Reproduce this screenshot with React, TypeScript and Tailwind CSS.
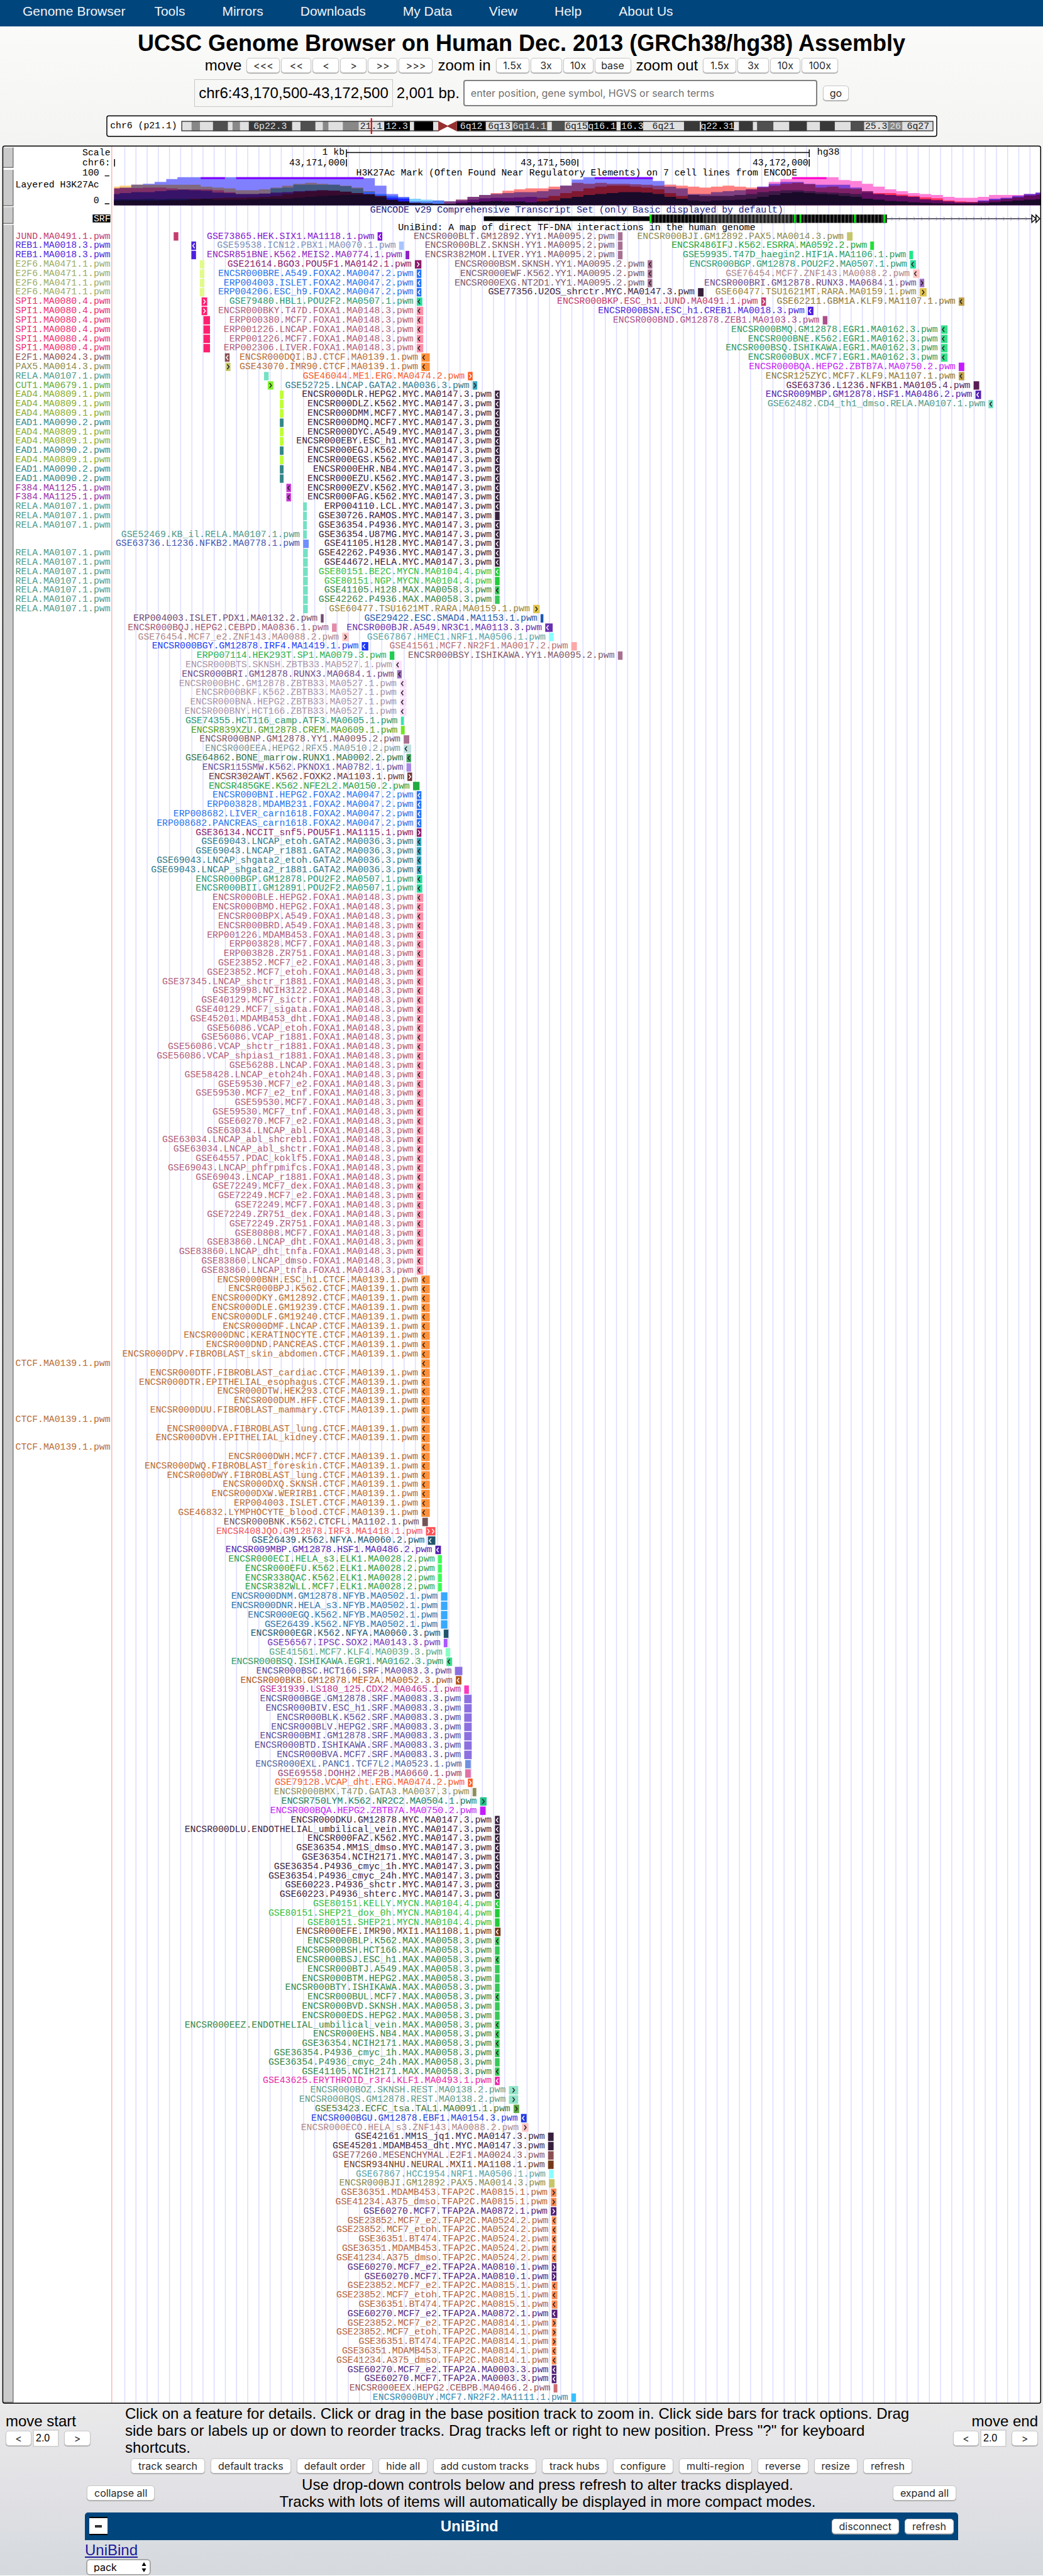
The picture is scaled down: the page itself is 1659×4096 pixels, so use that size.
import React from "react";

/* ---------- transcription factor colours: [label, box] ---------- */
const PALETTE: Record<string, [string, string]> = {
  JUND: ["#c43c6c", "#c43c6e"],
  REB1: ["#4d28dc", "#4d1ee0"],
  CREB1: ["#4d28dc", "#4d1ee0"],
  E2F6: ["#9aac62", "#e1fb8b"],
  SPI1: ["#f22a6c", "#ff1f70"],
  E2F1: ["#8a5257", "#8a4f52"],
  PAX5: ["#8b8b50", "#c6c66a"],
  RELA: ["#4f9a88", "#74e0c4"],
  CUT1: ["#62ac35", "#80f030"],
  EAD4: ["#85ad2c", "#bfff38"],
  EAD1: ["#348a88", "#358787"],
  F384: ["#9a2fa8", "#cc38d8"],
  SIX1: ["#8418d0", "#8010d8"],
  PBX1: ["#7d90b8", "#a9c4ff"],
  MEIS2: ["#8c28b8", "#8d20c4"],
  POU5F1: ["#8a1c6a", "#8a1a6c"],
  FOXA2: ["#2874ec", "#2070ff"],
  POU2F2: ["#2a9a74", "#28dfa0"],
  FOXA1: ["#b0607a", "#ff8fa8"],
  CTCF: ["#b96c34", "#ff9038"],
  CTCFL: ["#765458", "#745458"],
  ERG: ["#fa5a28", "#ff5a20"],
  GATA2: ["#2f7a8a", "#38a8c0"],
  GATA3: ["#8f8f58", "#8f8f58"],
  MYC: ["#3c2440", "#38203c"],
  MYCN: ["#34c040", "#20cc38"],
  MAX: ["#358848", "#38c858"],
  YY1: ["#805868", "#a87090"],
  ZEB1: ["#aa5088", "#aa5088"],
  ESRRA: ["#22a638", "#20e038"],
  HIF1A: ["#289c64", "#20e888"],
  ZNF143: ["#b08888", "#ffc4c4"],
  RUNX3: ["#704c88", "#a070c0"],
  RARA: ["#9a8438", "#e0c450"],
  KLF9: ["#8c7838", "#c0a048"],
  EGR1: ["#309a60", "#38e08c"],
  ZBTB7A: ["#c424f4", "#c41cff"],
  NFKB1: ["#5a1f56", "#581c54"],
  NFKB2: ["#4458b0", "#7090ff"],
  HSF1: ["#5424ac", "#5420b0"],
  PDX1: ["#704c70", "#704c70"],
  SMAD4: ["#1c58a8", "#1c58b0"],
  CEBPD: ["#a45870", "#e48ca8"],
  CEBPB: ["#9c5458", "#cc7074"],
  NR3C1: ["#6834ac", "#6830b0"],
  NRF1: ["#58a4a4", "#88ffff"],
  IRF4: ["#1c3cf4", "#1c38ff"],
  NR2F1: ["#b87070", "#ffa8a8"],
  SP1: ["#28b050", "#20cc54"],
  ZBTB33: ["#a894a8", "#fce0fc"],
  ATF3: ["#289870", "#38e4ac"],
  CREM: ["#509c20", "#70e818"],
  RFX5: ["#809898", "#c0e0e0"],
  RUNX1: ["#347448", "#48a868"],
  PKNOX1: ["#685098", "#a888e4"],
  FOXK2: ["#703838", "#703434"],
  NFE2L2: ["#28a040", "#20ac40"],
  IRF3: ["#f45458", "#ff5054"],
  NFYA: ["#245870", "#20546c"],
  NFYB: ["#2c74a8", "#38a8ff"],
  ELK1: ["#30a040", "#38ff50"],
  SOX2: ["#7838b8", "#a858ff"],
  KLF4: ["#58a880", "#88ffc4"],
  SRF: ["#5c4c98", "#8c70e0"],
  MEF2A: ["#b05820", "#b0581c"],
  MEF2B: ["#a04c74", "#e070a8"],
  CDX2: ["#c0308c", "#ff38c0"],
  TCF7L2: ["#5068a0", "#7090e0"],
  NR2C2: ["#208060", "#20c48c"],
  MXI1: ["#743c20", "#743818"],
  KLF1: ["#e828a8", "#ec20a8"],
  REST: ["#609c88", "#90e4c8"],
  TAL1: ["#487830", "#60a844"],
  EBF1: ["#2440dc", "#2038e0"],
  TFAP2C: ["#b46440", "#ff8c54"],
  TFAP2A: ["#54287c", "#542078"],
  NR2F2: ["#388cac", "#38c0ff"],
};

const WHITE_STRAND = new Set(
  "SIX1 CREB1 REB1 POU5F1 FOXA2 SPI1 E2F1 ERG MYC MYCN JUND HSF1 NR3C1 IRF4 FOXK2 IRF3 NFYA MEF2A MXI1 KLF1 EBF1 TFAP2A".split(" "),
);

/* [first row, x, width, strand, motif, sample names on consecutive rows];
   the name "-" puts a clipped label into the left gutter */
type Group = [number, number, number, string, string, string];

const GROUPS: Group[] = [
  [0, 373, 10, "", "JUND.MA0491.1", "-"],
  [1, 411, 10, "<", "REB1.MA0018.3", "-"],
  [2, 411, 10, "", "REB1.MA0018.3", "-"],
  [3, 429, 10, "", "E2F6.MA0471.1", "- - - -"],
  [7, 433, 12, ">", "SPI1.MA0080.4", "- -"],
  [9, 437, 14, "", "SPI1.MA0080.4", "- - - -"],
  [13, 483, 10, "<", "E2F1.MA0024.3", "-"],
  [14, 485, 10, ">", "PAX5.MA0014.3", "-"],
  [15, 567, 10, "", "RELA.MA0107.1", "-"],
  [16, 575, 12, ">", "CUT1.MA0679.1", "-"],
  [17, 601, 8, "", "EAD4.MA0809.1", "- - -"],
  [20, 601, 8, "", "EAD1.MA0090.2", "-"],
  [21, 601, 8, "", "EAD4.MA0809.1", "- -"],
  [23, 601, 8, "", "EAD1.MA0090.2", "-"],
  [24, 601, 8, "", "EAD4.MA0809.1", "-"],
  [25, 601, 8, "", "EAD1.MA0090.2", "- -"],
  [27, 615, 10, "<", "F384.MA1125.1", "- -"],
  [29, 651, 8, "", "RELA.MA0107.1", "- - - GSE52469.KB_il"],
  [33, 651, 12, "", "NFKB2.MA0778.1", "GSE63736.L1236"],
  [34, 651, 10, "", "RELA.MA0107.1", "- - - - - - -"],

  [0, 811, 10, "<", "SIX1.MA1118.1", "GSE73865.HEK"],
  [1, 857, 10, "", "PBX1.MA0070.1", "GSE59538.ICN12"],
  [2, 871, 8, "", "MEIS2.MA0774.1", "ENCSR851BNE.K562"],
  [3, 891, 14, ">", "POU5F1.MA0142.1", "GSE21614.BGO3"],
  [4, 895, 10, "<", "FOXA2.MA0047.2", "ENCSR000BRE.A549 ERP004003.ISLET ERP004206.ESC_h9"],
  [7, 895, 12, "<", "POU2F2.MA0507.1", "GSE79480.HBL1"],
  [8, 895, 14, "<", "FOXA1.MA0148.3", "ENCSR000BKY.T47D ERP000380.MCF7 ERP001226.LNCAP ERP001226.MCF7 ERP002306.LIVER"],
  [13, 905, 18, "<", "CTCF.MA0139.1", "ENCSR000DQI.BJ GSE43070.IMR90"],
  [15, 1005, 10, ">", "ERG.MA0474.2", "GSE46044.ME1"],
  [16, 1015, 10, ">", "GATA2.MA0036.3", "GSE52725.LNCAP"],
  [17, 1063, 10, "<", "MYC.MA0147.3", "ENCSR000DLR.HEPG2 ENCSR000DLZ.K562 ENCSR000DMM.MCF7 ENCSR000DMQ.MCF7 ENCSR000DYC.A549 ENCSR000EBY.ESC_h1 ENCSR000EGJ.K562 ENCSR000EGS.K562 ENCSR000EHR.NB4 ENCSR000EZU.K562 ENCSR000EZV.K562 ENCSR000FAG.K562 ERP004110.LCL"],
  [30, 1063, 10, "", "MYC.MA0147.3", "GSE30726.RAMOS"],
  [31, 1063, 10, "<", "MYC.MA0147.3", "GSE36354.P4936 GSE36354.U87MG GSE41105.H128 GSE42262.P4936 GSE44672.HELA"],
  [36, 1063, 10, "<", "MYCN.MA0104.4", "GSE80151.BE2C"],
  [37, 1063, 10, "", "MYCN.MA0104.4", "GSE80151.NGP"],
  [38, 1063, 10, "<", "MAX.MA0058.3", "GSE41105.H128"],
  [39, 1063, 10, "", "MAX.MA0058.3", "GSE42262.P4936"],
  [40, 1145, 14, ">", "RARA.MA0159.1", "GSE60477.TSU1621MT"],

  [0, 1327, 10, "", "YY1.MA0095.2", "ENCSR000BLT.GM12892 ENCSR000BLZ.SKNSH ENCSR382MOM.LIVER"],
  [3, 1391, 10, "<", "YY1.MA0095.2", "ENCSR000BSM.SKNSH ENCSR000EWF.K562 ENCSR000EXG.NT2D1"],
  [6, 1499, 12, "", "MYC.MA0147.3", "GSE77356.U2OS_shrctr"],
  [7, 1635, 10, ">", "JUND.MA0491.1", "ENCSR000BKP.ESC_h1"],
  [8, 1735, 12, "<", "CREB1.MA0018.3", "ENCSR000BSN.ESC_h1"],
  [9, 1767, 10, "", "ZEB1.MA0103.3", "ENCSR000BND.GM12878"],

  [0, 1819, 12, "", "PAX5.MA0014.3", "ENCSR000BJI.GM12892"],
  [1, 1869, 8, "", "ESRRA.MA0592.2", "ENCSR486IFJ.K562"],
  [2, 1953, 8, "", "HIF1A.MA1106.1", "GSE59935.T47D_haegin2"],
  [3, 1955, 12, "<", "POU2F2.MA0507.1", "ENCSR000BGP.GM12878"],
  [4, 1961, 14, "<", "ZNF143.MA0088.2", "GSE76454.MCF7"],
  [5, 1975, 10, ">", "RUNX3.MA0684.1", "ENCSR000BRI.GM12878"],
  [6, 1975, 15, ">", "RARA.MA0159.1", "GSE60477.TSU1621MT"],
  [7, 2059, 12, "<", "KLF9.MA1107.1", "GSE62211.GBM1A"],
  [10, 2021, 14, "<", "EGR1.MA0162.3", "ENCSR000BMQ.GM12878 ENCSR000BNE.K562 ENCSR000BSQ.ISHIKAWA ENCSR000BUX.MCF7"],
  [14, 2059, 12, "", "ZBTB7A.MA0750.2", "ENCSR000BQA.HEPG2"],
  [15, 2059, 12, "<", "KLF9.MA1107.1", "ENCSR125ZYC.MCF7"],
  [16, 2091, 12, "", "NFKB1.MA0105.4", "GSE63736.L1236"],
  [17, 2095, 12, "<", "HSF1.MA0486.2", "ENCSR009MBP.GM12878"],
  [18, 2123, 10, "<", "RELA.MA0107.1", "GSE62482.CD4_th1_dmso"],

  [41, 689, 6, "", "PDX1.MA0132.2", "ERP004003.ISLET"],
  [41, 1161, 6, "", "SMAD4.MA1153.1", "GSE29422.ESC"],
  [42, 713, 10, "", "CEBPD.MA0836.1", "ENCSR000BQJ.HEPG2"],
  [42, 1171, 16, "<", "NR3C1.MA0113.3", "ENCSR000BJR.A549"],
  [43, 735, 14, ">", "ZNF143.MA0088.2", "GSE76454.MCF7_e2"],
  [43, 1179, 10, "", "NRF1.MA0506.1", "GSE67867.HMEC1"],
  [44, 777, 14, "<", "IRF4.MA1419.1", "ENCSR000BGY.GM12878"],
  [44, 1227, 12, "", "NR2F1.MA0017.2", "GSE41561.MCF7"],
  [45, 837, 10, "", "SP1.MA0079.3", "ERP007114.HEK293T"],
  [45, 1327, 10, "", "YY1.MA0095.2", "ENCSR000BSY.ISHIKAWA"],
  [46, 849, 14, "<", "ZBTB33.MA0527.1", "ENCSR000BTS.SKNSH"],
  [47, 853, 10, "<", "RUNX3.MA0684.1", "ENCSR000BRI.GM12878"],
  [48, 859, 14, "<", "ZBTB33.MA0527.1", "ENCSR000BHC.GM12878 ENCSR000BKF.K562 ENCSR000BNA.HEPG2 ENCSR000BNY.HCT166"],
  [52, 861, 6, "", "ATF3.MA0605.1", "GSE74355.HCT116_camp"],
  [53, 861, 8, "", "CREM.MA0609.1", "ENCSR839XZU.GM12878"],
  [54, 867, 12, "", "YY1.MA0095.2", "ENCSR000BNP.GM12878"],
  [55, 867, 16, "<", "RFX5.MA0510.2", "ENCSR000EEA.HEPG2"],
  [56, 873, 10, "<", "RUNX1.MA0002.2", "GSE64862.BONE_marrow"],
  [57, 873, 10, "", "PKNOX1.MA0782.1", "ENCSR115SMW.K562"],
  [58, 875, 10, ">", "FOXK2.MA1103.1", "ENCSR302AWT.K562"],
  [59, 887, 14, "", "NFE2L2.MA0150.2", "ENCSR485GKE.K562"],
  [60, 895, 10, "<", "FOXA2.MA0047.2", "ENCSR000BNI.HEPG2 ERP003828.MDAMB231 ERP008682.LIVER_carn1618 ERP008682.PANCREAS_carn1618"],
  [64, 895, 10, ">", "POU5F1.MA1115.1", "GSE36134.NCCIT_snf5"],
  [65, 895, 10, "<", "GATA2.MA0036.3", "GSE69043.LNCAP_etoh GSE69043.LNCAP_r1881 GSE69043.LNCAP_shgata2_etoh GSE69043.LNCAP_shgata2_r1881"],
  [69, 895, 12, "<", "POU2F2.MA0507.1", "ENCSR000BGP.GM12878 ENCSR000BII.GM12891"],
  [71, 895, 14, "<", "FOXA1.MA0148.3", "ENCSR000BLE.HEPG2 ENCSR000BMO.HEPG2 ENCSR000BPX.A549 ENCSR000BRD.A549 ERP001226.MDAMB453 ERP003828.MCF7 ERP003828.ZR751 GSE23852.MCF7_e2 GSE23852.MCF7_etoh GSE37345.LNCAP_shctr_r1881 GSE39998.NCIH3122 GSE40129.MCF7_sictr GSE40129.MCF7_sigata GSE45201.MDAMB453_dht GSE56086.VCAP_etoh GSE56086.VCAP_r1881 GSE56086.VCAP_shctr_r1881 GSE56086.VCAP_shpias1_r1881 GSE56288.LNCAP GSE58428.LNCAP_etoh24h GSE59530.MCF7_e2 GSE59530.MCF7_e2_tnf GSE59530.MCF7 GSE59530.MCF7_tnf GSE60270.MCF7_e2 GSE63034.LNCAP_abl GSE63034.LNCAP_abl_shcreb1 GSE63034.LNCAP_abl_shctr GSE64557.PDAC_koklf5 GSE69043.LNCAP_phfrpmifcs GSE69043.LNCAP_r1881 GSE72249.MCF7_dex GSE72249.MCF7_e2 GSE72249.MCF7 GSE72249.ZR751_dex GSE72249.ZR751 GSE80808.MCF7 GSE83860.LNCAP_dht GSE83860.LNCAP_dht_tnfa GSE83860.LNCAP_dmso GSE83860.LNCAP_tnfa"],
  [112, 905, 18, "<", "CTCF.MA0139.1", "ENCSR000BNH.ESC_h1 ENCSR000BPJ.K562 ENCSR000DKY.GM12892 ENCSR000DLE.GM19239 ENCSR000DLF.GM19240 ENCSR000DMF.LNCAP ENCSR000DNC.KERATINOCYTE ENCSR000DND.PANCREAS ENCSR000DPV.FIBROBLAST_skin_abdomen - ENCSR000DTF.FIBROBLAST_cardiac ENCSR000DTR.EPITHELIAL_esophagus ENCSR000DTW.HEK293 ENCSR000DUM.HFF ENCSR000DUU.FIBROBLAST_mammary - ENCSR000DVA.FIBROBLAST_lung ENCSR000DVH.EPITHELIAL_kidney - ENCSR000DWH.MCF7 ENCSR000DWQ.FIBROBLAST_foreskin ENCSR000DWY.FIBROBLAST_lung ENCSR000DXQ.SKNSH ENCSR000DXW.WERIRB1 ERP004003.ISLET GSE46832.LYMPHOCYTE_blood"],
  [138, 907, 12, "", "CTCFL.MA1102.1", "ENCSR000BNK.K562"],
  [139, 915, 20, ">>", "IRF3.MA1418.1", "ENCSR408JQO.GM12878"],
  [140, 919, 16, "<", "NFYA.MA0060.2", "GSE26439.K562"],
  [141, 935, 12, "<", "HSF1.MA0486.2", "ENCSR009MBP.GM12878"],
  [142, 941, 8, "", "ELK1.MA0028.2", "ENCSR000ECI.HELA_s3 ENCSR000EFU.K562 ENCSR338QAC.K562 ENCSR382WLL.MCF7"],
  [146, 947, 14, "", "NFYB.MA0502.1", "ENCSR000DNM.GM12878 ENCSR000DNR.HELA_s3 ENCSR000EGQ.K562 GSE26439.K562"],
  [150, 953, 10, "", "NFYA.MA0060.3", "ENCSR000EGR.K562"],
  [151, 953, 8, "", "SOX2.MA0143.3", "GSE56567.IPSC"],
  [152, 957, 10, "", "KLF4.MA0039.3", "GSE41561.MCF7"],
  [153, 959, 12, "<", "EGR1.MA0162.3", "ENCSR000BSQ.ISHIKAWA"],
  [154, 977, 16, "", "SRF.MA0083.3", "ENCSR000BSC.HCT166"],
  [155, 979, 12, "<", "MEF2A.MA0052.3", "ENCSR000BKB.GM12878"],
  [156, 997, 10, "", "CDX2.MA0465.1", "GSE31939.LS180_125"],
  [157, 997, 16, "", "SRF.MA0083.3", "ENCSR000BGE.GM12878 ENCSR000BIV.ESC_h1 ENCSR000BLK.K562 ENCSR000BLV.HEPG2 ENCSR000BMI.GM12878 ENCSR000BTD.ISHIKAWA ENCSR000BVA.MCF7"],
  [164, 999, 12, "", "TCF7L2.MA0523.1", "ENCSR000EXL.PANC1"],
  [165, 999, 12, "", "MEF2B.MA0660.1", "GSE69558.DOHH2"],
  [166, 1005, 10, ">", "ERG.MA0474.2", "GSE79128.VCAP_dht"],
  [167, 1015, 8, "", "GATA3.MA0037.3", "ENCSR000BMX.T47D"],
  [168, 1031, 14, ">", "NR2C2.MA0504.1", "ENCSR750LYM.K562"],
  [169, 1031, 12, "", "ZBTB7A.MA0750.2", "ENCSR000BQA.HEPG2"],
  [170, 1063, 10, "<", "MYC.MA0147.3", "ENCSR000DKU.GM12878 ENCSR000DLU.ENDOTHELIAL_umbilical_vein ENCSR000FAZ.K562 GSE36354.MM1S_dmso GSE36354.NCIH2171 GSE36354.P4936_cmyc_1h GSE36354.P4936_cmyc_24h GSE60223.P4936_shctr GSE60223.P4936_shterc"],
  [179, 1063, 10, "<", "MYCN.MA0104.4", "GSE80151.KELLY"],
  [180, 1063, 10, "", "MYCN.MA0104.4", "GSE80151.SHEP21_dox_0h GSE80151.SHEP21"],
  [182, 1063, 12, "<", "MXI1.MA1108.1", "ENCSR000EFE.IMR90"],
  [183, 1063, 10, "<", "MAX.MA0058.3", "ENCSR000BLP.K562"],
  [184, 1063, 10, "", "MAX.MA0058.3", "ENCSR000BSH.HCT166"],
  [185, 1063, 10, "<", "MAX.MA0058.3", "ENCSR000BSJ.ESC_h1"],
  [186, 1063, 10, "", "MAX.MA0058.3", "ENCSR000BTJ.A549 ENCSR000BTM.HEPG2 ENCSR000BTY.ISHIKAWA"],
  [189, 1063, 10, "<", "MAX.MA0058.3", "ENCSR000BUL.MCF7"],
  [190, 1063, 10, "", "MAX.MA0058.3", "ENCSR000BVD.SKNSH ENCSR000EDS.HEPG2"],
  [192, 1063, 10, "<", "MAX.MA0058.3", "ENCSR000EEZ.ENDOTHELIAL_umbilical_vein ENCSR000EHS.NB4 GSE36354.NCIH2171 GSE36354.P4936_cmyc_1h"],
  [196, 1063, 10, "", "MAX.MA0058.3", "GSE36354.P4936_cmyc_24h"],
  [197, 1063, 10, "<", "MAX.MA0058.3", "GSE41105.NCIH2171"],
  [198, 1063, 10, "<", "KLF1.MA0493.1", "GSE43625.ERYTHROID_r3r4"],
  [199, 1093, 20, ">", "REST.MA0138.2", "ENCSR000BOZ.SKNSH ENCSR000BQS.GM12878"],
  [201, 1103, 12, ">", "TAL1.MA0091.1", "GSE53423.ECFC_tsa"],
  [202, 1119, 12, "<", "EBF1.MA0154.3", "ENCSR000BGU.GM12878"],
  [203, 1121, 14, ">", "ZNF143.MA0088.2", "ENCSR000ECO.HELA_s3"],
  [204, 1177, 12, "", "MYC.MA0147.3", "GSE42161.MM1S_jq1 GSE45201.MDAMB453_dht"],
  [206, 1177, 12, "", "E2F1.MA0024.3", "GSE77260.MESENCHYMAL"],
  [207, 1177, 12, "", "MXI1.MA1108.1", "ENCSR934NHU.NEURAL"],
  [208, 1179, 10, "", "NRF1.MA0506.1", "GSE67867.HCC1954"],
  [209, 1179, 12, "", "PAX5.MA0014.3", "ENCSR000BJI.GM12892"],
  [210, 1183, 12, ">", "TFAP2C.MA0815.1", "GSE36351.MDAMB453 GSE41234.A375_dmso"],
  [212, 1183, 12, ">", "TFAP2A.MA0872.1", "GSE60270.MCF7"],
  [213, 1185, 10, "<", "TFAP2C.MA0524.2", "GSE23852.MCF7_e2 GSE23852.MCF7_etoh GSE36351.BT474 GSE36351.MDAMB453 GSE41234.A375_dmso"],
  [218, 1185, 10, ">", "TFAP2A.MA0810.1", "GSE60270.MCF7_e2 GSE60270.MCF7"],
  [220, 1185, 12, "<", "TFAP2C.MA0815.1", "GSE23852.MCF7_e2 GSE23852.MCF7_etoh GSE36351.BT474"],
  [223, 1185, 12, "<", "TFAP2A.MA0872.1", "GSE60270.MCF7_e2"],
  [224, 1185, 10, ">", "TFAP2C.MA0814.1", "GSE23852.MCF7_e2 GSE23852.MCF7_etoh GSE36351.BT474"],
  [227, 1185, 10, "<", "TFAP2C.MA0814.1", "GSE36351.MDAMB453 GSE41234.A375_dmso"],
  [229, 1185, 10, "<", "TFAP2A.MA0003.3", "GSE60270.MCF7_e2 GSE60270.MCF7"],
  [231, 1189, 8, "", "CEBPB.MA0466.2", "ENCSR000EEX.HEPG2"],
  [232, 1227, 10, "", "NR2F2.MA1111.1", "ENCSR000BUY.MCF7"],
];

/* ---------- H3K27Ac layers, back to front: [colour, first bin, heights] ---------- */
const LAYERS: [string, number, number[]][] = [
  ["#ffc878", 0, [40, 42, 44]],
  ["#8080ff", 2, [44, 46, 50, 56, 60, 60, 60, 60, 60, 60, 60, 60, 60, 60, 60, 60, 60, 60, 60, 60, 58, 42, 24, 18]],
  ["#ff8080", 30, [12, 18, 22, 26, 31, 34, 36, 36, 40, 42]],
  ["#8080ff", 39, [42, 55, 60, 60, 60, 60, 60, 60, 52, 44]],
  ["#ff8080", 48, [44, 42, 40, 38, 40, 42, 40, 38, 38]],
  ["#ff80d8", 57, [50, 56, 60, 60, 60, 60, 54, 52, 46, 40, 34, 30, 26, 24, 22, 18, 16, 16, 18, 22, 22, 22, 24, 26]],
  ["#80687f", 1, [38, 44, 44, 44, 44, 44, 44, 40, 38, 36, 32, 32, 34, 38, 42, 46, 48, 46, 44, 42, 38, 30]],
  ["#405880", 14, [36, 38, 44, 44, 44, 44, 41, 36, 29, 22]],
  ["#3060ff", 22, [28, 24, 20, 16, 12, 6]],
  ["#2020ff", 24, [16, 14, 8]],
  ["#80d0ff", 26, [14, 12]],
  ["#5080f0", 26, [8, 8, 10, 8]],
  ["#803068", 0, [36, 37, 37, 38, 38, 36, 34, 34, 34, 32, 28]],
  ["#804080", 29, [8, 12, 18, 22, 24, 26, 28, 28, 30, 34, 42, 48, 46, 48, 46, 46, 45, 44, 42, 40, 36, 24, 24, 28, 30, 32, 34, 38]],
  ["#8040d0", 56, [40, 46, 50, 50, 46, 44, 44, 44, 38]],
  ["#802068", 55, [34, 38, 42, 46, 48, 45, 38, 40, 36, 35, 30, 26, 22]],
  ["#ff3060", 66, [26, 26, 23, 20, 17, 15, 10, 8, 7, 7]],
  ["#7030d0", 75, [10, 14, 16, 20, 24, 27]],
  ["#5c1070", 30, [8, 12, 15, 16, 16, 17, 18, 16, 18]],
  ["#801830", 37, [14, 20, 26, 30, 36, 40, 42, 42, 40, 38, 34, 26, 20, 16]],
  ["#401848", 50, [22, 20, 20, 20, 22, 24, 28, 30, 32, 32, 30, 28, 27, 26, 24, 22]],
  ["#600c60", 65, [27, 24, 22, 20, 18, 13, 11, 8, 6, 6, 8, 11, 14, 17, 21, 23]],
  ["#381468", 0, [24, 26, 28, 28, 30, 32, 33, 32, 31, 27, 26, 24, 24, 25, 27, 28, 30, 31, 31, 31, 28, 26, 20]],
  ["#181450", 0, [13, 13, 13, 14, 13, 14, 14, 13]],
  ["#380a30", 7, [14, 14, 15, 16, 16, 17, 18, 20, 24, 28, 30, 32, 31, 29, 26, 24, 20]],
  ["#180a28", 0, [10, 10, 10, 10, 10, 11, 11, 12, 14, 12, 12, 12, 13, 14, 14, 14, 16, 18, 20, 21, 22, 22, 22, 17, 12, 8, 5, 4, 3, 3, 4, 6, 8, 9, 8, 8, 6, 8, 10, 15, 18, 22, 24, 26, 28, 28, 27, 24, 18, 14, 10, 8, 10, 11, 12, 14, 18, 22, 26, 28, 26, 24, 23, 20, 18, 14, 12, 9, 8, 6, 5, 4, 3, 3, 3, 4, 6, 8, 10, 12, 13]],
];

const binX = (i: number) => Math.min(2235, Math.max(245, Math.round(232 + 24.9 * i)));

const stepPath = (first: number, heights: number[]) => {
  let d = `M${binX(first)} 440`;
  heights.forEach((h, k) => {
    d += `V${440 - h}H${binX(first + k + 1)}`;
  });
  return d + "V440Z";
};

const chevron = (cx: number, cy: number, dir: string) =>
  dir === "<" ? `M${cx + 2} ${cy - 5}L${cx - 2} ${cy}L${cx + 2} ${cy + 5}` : `M${cx - 2} ${cy - 5}L${cx + 2} ${cy}L${cx - 2} ${cy + 5}`;

function Hits() {
  return (
    <g>
      {GROUPS.flatMap(([row, x, w, strand, motif, names]) =>
        names.split(" ").map((name, k) => {
          const tf = motif.split(".")[0];
          const [ink, fill] = PALETTE[tf];
          const top = 498 + 20 * (row + k);
          const gutter = name === "-";
          const label = gutter ? `${motif}.pwm` : `${name}.${motif}.pwm`;
          const arrow = WHITE_STRAND.has(tf) ? "#ffffff" : "#202020";
          const cx = strand === "<" ? x + 5 : x + w / 2;
          return (
            <g key={`${row + k}-${x}`}>
              <text x={gutter ? 237 : x - 7} y={top + 14} textAnchor="end" fill={ink}>
                {label}
              </text>
              <rect x={x} y={top} width={w} height={18} fill={fill} />
              {strand === ">>" ? (
                <path d={chevron(x + 5, top + 9, ">") + chevron(x + 15, top + 9, ">")} fill="none" stroke={arrow} strokeWidth={2} />
              ) : strand ? (
                <path d={chevron(cx, top + 9, strand)} fill="none" stroke={arrow} strokeWidth={2} />
              ) : null}
            </g>
          );
        }),
      )}
    </g>
  );
}

const GUIDES = Array.from({ length: 82 }, (_, i) => 268 + 24 * i);
const SIDE_BARS: [number, number][] = [
  [316, 360],
  [364, 442],
  [444, 480],
  [482, 5158],
];

function TrackImage() {
  return (
    <svg viewBox="0 310 2240 4852" className="mt-[11px] block w-full font-['Liberation_Mono',monospace] text-[20px]" role="img" aria-label="Genome tracks">
      <defs>
        <pattern id="codons" width="8" height="18" patternUnits="userSpaceOnUse">
          <rect width="8" height="18" fill="#000" />
          <rect x="5" width="3" height="18" fill="#484848" />
        </pattern>
        <pattern id="codonsLight" width="8" height="18" patternUnits="userSpaceOnUse">
          <rect width="8" height="18" fill="#1c1c1c" />
          <rect x="4" width="4" height="18" fill="#5c5c5c" />
        </pattern>
      </defs>
      <rect x="6" y="313" width="2229" height="4846" rx="4" fill="#fff" />
      <path d={GUIDES.map((x) => `M${x} 314V5158`).join("")} stroke="#dcdcff" strokeWidth="2" />
      <path d="M240 314V5158" stroke="#ffb4b4" strokeWidth="2" />
      {SIDE_BARS.map(([a, b]) => (
        <g key={a}>
          <rect x="7" y={a} width="22" height={b - a} fill="#cacaca" />
          <path d={`M28 ${a}V${b - 1}H7`} fill="none" stroke="#808080" strokeWidth="2" />
        </g>
      ))}

      <g fill="#000">
        <g textAnchor="end">
          <text x="237" y="333">Scale</text>
          <text x="237" y="355">chr6:</text>
          <text x="740" y="332">1 kb</text>
          <text x="741" y="355">43,171,000</text>
          <text x="1238" y="355">43,171,500</text>
          <text x="1736" y="355">43,172,000</text>
          <text x="213" y="376">100</text>
          <text x="213" y="402">Layered H3K27Ac</text>
          <text x="213" y="435">0</text>
        </g>
        <text x="1755" y="331">hg38</text>
        <text x="765" y="376">H3K27Ac Mark (Often Found Near Regulatory Elements) on 7 cell lines from ENCODE</text>
        <text x="855" y="493">UniBind: A map of direct TF-DNA interactions in the human genome</text>
      </g>
      <path d="M744 320V337M744 327H1738M1738 320V337M246 341V357M744 341V357M1241 341V357M1738 341V357M225 377H235M225 437H235" stroke="#000" strokeWidth="2" fill="none" />

      {LAYERS.map(([color, first, heights]) => (
        <path key={color + first} d={stepPath(first, heights)} fill={color} />
      ))}
      <path d="M431 382H483M507 382H781M1277 382H1402" stroke="#8000ff" strokeWidth="4" />
      <path d="M1701 382H1775" stroke="#ff00d0" strokeWidth="4" />

      <text x="795" y="456" fill="#202080">GENCODE v29 Comprehensive Transcript Set (only Basic displayed by default)</text>
      <rect x="199" y="460" width="38" height="17" fill="#000" />
      <text x="237" y="475" textAnchor="end" fill="#fff">SRF</text>
      <rect x="1039" y="464" width="357" height="10" fill="#000" />
      <rect x="1396" y="460" width="509" height="18" fill="url(#codons)" />
      <rect x="1510" y="460" width="190" height="18" fill="url(#codonsLight)" />
      <path d="M1397 460V478M1707 460V478M1719 460V478M1836 460V478M1899 460V478" stroke="#00e810" strokeWidth="4" />
      <path d="M1905 469H2216" stroke="#303040" strokeWidth="2" />
      <path d={Array.from({ length: 19 }, (_, i) => `M${1914 + 16 * i} 465l4 4l-4 4`).join("")} fill="none" stroke="#7070a8" strokeWidth="1" />
      <path d="M2216 461L2225 469L2216 477ZM2225 461L2233 469L2225 477Z" fill="#fff" stroke="#000" strokeWidth="2" />

      <Hits />
      <rect x="6" y="313" width="2229" height="4846" rx="4" fill="none" stroke="#000" strokeWidth="2" />
    </svg>
  );
}

/* ---------- chromosome ideogram: [x, width, colour] ---------- */
const BANDS: [number, number, string][] = [
  [411, 18, "#888888"], [457, 32, "#505050"], [499, 16, "#888888"], [534, 93, "#383838"], [645, 32, "#505050"],
  [693, 12, "#888888"], [736, 34, "#888888"], [825, 55, "#000000"], [889, 41, "#000000"], [981, 62, "#000000"],
  [1100, 75, "#505050"], [1185, 28, "#505050"], [1263, 61, "#000000"], [1333, 48, "#000000"], [1469, 34, "#383838"],
  [1506, 70, "#000000"], [1587, 30, "#383838"], [1626, 35, "#505050"], [1695, 38, "#383838"], [1761, 32, "#383838"],
  [1827, 29, "#505050"], [1907, 31, "#888888"],
];
const BAND_LABELS: [number, string, string][] = [
  [580, "6p22.3", "#e0e0e0"], [797, "21.1", "#202020"], [852, "12.3", "#e0e0e0"], [1012, "6q12", "#e0e0e0"],
  [1072, "6q13", "#202020"], [1137, "6q14.1", "#e0e0e0"], [1238, "6q15", "#202020"], [1293, "q16.1", "#e0e0e0"],
  [1358, "16.3", "#e0e0e0"], [1425, "6q21", "#202020"], [1541, "q22.31", "#e0e0e0"], [1882, "25.3", "#202020"],
  [1923, "26", "#e0e0e0"], [1972, "6q27", "#202020"],
];

function Ideogram() {
  return (
    <svg viewBox="224 246 1792 50" className="mx-auto mt-[12px] block w-4/5 font-['Liberation_Mono',monospace] text-[20px]" role="img" aria-label="Chromosome 6 ideogram">
      <rect x="229" y="249" width="1783" height="44" rx="4" fill="#fff" stroke="#000" strokeWidth="2" />
      <text x="236" y="276" fill="#000">chr6 (p21.1)</text>
      <rect x="389" y="260" width="553" height="22" fill="#e0e0e0" />
      <rect x="981" y="260" width="1024" height="22" fill="#e0e0e0" />
      {BANDS.map(([x, w, c]) => (
        <rect key={x} x={x} y="260" width={w} height="22" fill={c} />
      ))}
      <path d="M390 282V261H942M390 281H942M981 261H2004V281H981" fill="none" stroke="#444" strokeWidth="2" />
      <path d="M941 260L961 270L981 260V282L961 272L941 282Z" fill="#983030" />
      {BAND_LABELS.map(([x, t, c]) => (
        <text key={t} x={x} y="277" textAnchor="middle" fill={c}>
          {t}
        </text>
      ))}
      <rect x="796" y="254" width="3" height="34" fill="#f00" />
    </svg>
  );
}

function Btn({ children, className = "px-[11px]", label }: { children: React.ReactNode; className?: string; label?: string }) {
  return (
    <button
      type="button"
      aria-label={label}
      className={`flex h-6 shrink-0 items-center justify-center rounded-[5px] border border-[#c8c8c8] bg-white font-['Inter',sans-serif] text-[16px] leading-none whitespace-nowrap text-[#2a2a2a] shadow-[0_1px_1px_#a0a0a0] ${className}`}
    >
      {children}
    </button>
  );
}

const NAV = ["Tools", "Mirrors", "Downloads", "My Data", "View", "Help", "About Us"];

function Mover({ title, id }: { title: string; id: string }) {
  return (
    <div className="pt-[12px]">
      <label htmlFor={id} className="block leading-[27px]">
        {title}
      </label>
      <div className="flex items-center">
        <Btn className="w-[41px]" label={`${title} left`}>&lt;</Btn>
        <input id={id} defaultValue="2.0" className="ml-[2px] h-[28px] w-[42px] border-2 border-[#d4d4d4] bg-white pl-[3px] text-[16px]" />
        <Btn className="ml-[8px] w-[42px]" label={`${title} right`}>&gt;</Btn>
      </div>
    </div>
  );
}

export default function App() {
  return (
    <div className="w-full bg-[linear-gradient(to_bottom,#fcfcfb_0px,#f4f4f3_230px,#e9e9ea_3824px,#e1e0e4_3970px,#d8dce0_4050px,#d6dade_100%)] font-['Liberation_Sans',Arial,sans-serif] text-[24px] text-black">
      <nav className="flex h-[42px] bg-[#00457c] pl-[36px] text-[21px] leading-[36px] text-[#f0f4f8]">
        <a href="#home" className="mr-[46px]">Genome Browser</a>
        <div className="flex gap-[59px]">
          {NAV.map((n) => (
            <a key={n} href="#menu">{n}</a>
          ))}
        </div>
      </nav>

      <header>
        <h1 className="pt-[6px] text-center text-[36px] leading-[42px] font-bold">UCSC Genome Browser on Human Dec. 2013 (GRCh38/hg38) Assembly</h1>
        <div className="mt-[2px] flex justify-center gap-[8px] leading-[23px]">
          <span>move</span>
          <div className="flex gap-[2px]">
            <Btn className="w-[53px]">&lt;&lt;&lt;</Btn>
            <Btn className="w-[48px]">&lt;&lt;</Btn>
            <Btn className="w-[42px]">&lt;</Btn>
            <Btn className="w-[42px]">&gt;</Btn>
            <Btn className="w-[47px]">&gt;&gt;</Btn>
            <Btn className="w-[54px]">&gt;&gt;&gt;</Btn>
          </div>
          <span>zoom in</span>
          <div className="flex gap-[2px]">
            <Btn className="w-[53px]">1.5x</Btn>
            <Btn className="w-[50px]">3x</Btn>
            <Btn className="w-[48px]">10x</Btn>
            <Btn className="w-[58px]">base</Btn>
          </div>
          <span>zoom out</span>
          <div className="flex gap-[2px]">
            <Btn className="w-[53px]">1.5x</Btn>
            <Btn className="w-[50px]">3x</Btn>
            <Btn className="w-[48px]">10x</Btn>
            <Btn className="w-[58px]">100x</Btn>
          </div>
        </div>

        <form className="mt-[10px] flex h-[44px] items-center justify-center gap-[6px]">
          <span className="flex h-full items-center border border-[#c8c8c8] px-[6px]">chr6:43,170,500-43,172,500</span>
          <span>2,001 bp.</span>
          <input
            aria-label="Position or search term"
            placeholder="enter position, gene symbol, HGVS or search terms"
            className="h-[42px] w-[563px] rounded-[4px] border-2 border-[#808080] bg-white px-[10px] font-['Inter',sans-serif] text-[16px] placeholder:text-[#707070]"
          />
          <Btn className="ml-[3px] w-[41px]">go</Btn>
        </form>
        <Ideogram />
      </header>

      <TrackImage />

      <section className="flex">
        <div className="w-[199px] shrink-0 pl-[9px]">
          <Mover title="move start" id="moveStart" />
        </div>
        <p className="flex-1 leading-[27px]">
          Click on a feature for details. Click or drag in the base position track to zoom in. Click side bars for track options. Drag side bars or
          labels up or down to reorder tracks. Drag tracks left or right to new position. Press "?" for keyboard shortcuts.
        </p>
        <div className="flex w-[201px] shrink-0 justify-end pr-[8px]">
          <div className="text-right">
            <Mover title="move end" id="moveEnd" />
          </div>
        </div>
      </section>

      <div className="mt-[4px] flex justify-center gap-[9px]">
        {["track search", "default tracks", "default order", "hide all", "add custom tracks", "track hubs", "configure", "multi-region", "reverse", "resize", "refresh"].map((t) => (
          <Btn key={t}>{t}</Btn>
        ))}
      </div>

      <main className="mx-[135px]">
        <div className="mt-[4px] flex items-center px-[3px]">
          <div className="w-[184px]">
            <Btn>collapse all</Btn>
          </div>
          <p className="flex-1 text-center leading-[27px]">
            Use drop-down controls below and press refresh to alter tracks displayed.
            <br />
            Tracks with lots of items will automatically be displayed in more compact modes.
          </p>
          <Btn>expand all</Btn>
        </div>

        <div className="mt-[4px] flex h-[44px] items-center rounded-t-[5px] bg-[#00457c] px-[7px]">
          <button type="button" aria-label="Collapse UniBind" className="flex h-[29px] w-[29px] items-center justify-center border-y-2 border-black bg-white">
            <span className="h-[4px] w-[11px] bg-[#333]" />
          </button>
          <h2 className="flex-1 text-center font-bold text-white">UniBind</h2>
          <div className="flex gap-[9px]">
            <Btn>disconnect</Btn>
            <Btn>refresh</Btn>
          </div>
        </div>

        <label htmlFor="unibindMode" className="mt-[2px] block leading-[27px]">
          <a href="#unibind" className="text-[#1c1c9c] underline">UniBind</a>
        </label>
        <div className="relative mt-[1px] mb-[1px] ml-[2px] w-[103px]">
          <select id="unibindMode" defaultValue="pack" className="block h-[26px] w-full appearance-none rounded-[6px] border-2 border-[#a8a8a8] bg-white pl-[10px] font-['Inter',sans-serif] text-[16px] leading-none">
            <option>hide</option>
            <option>dense</option>
            <option>squish</option>
            <option>pack</option>
            <option>full</option>
          </select>
          <svg viewBox="0 0 8 18" className="pointer-events-none absolute top-[4px] right-[7px] h-[18px] w-[8px]" aria-hidden="true">
            <path d="M4 1L7.500 7H.5ZM4 17L7.500 11H.5Z" fill="#000" />
          </svg>
        </div>
      </main>
    </div>
  );
}
